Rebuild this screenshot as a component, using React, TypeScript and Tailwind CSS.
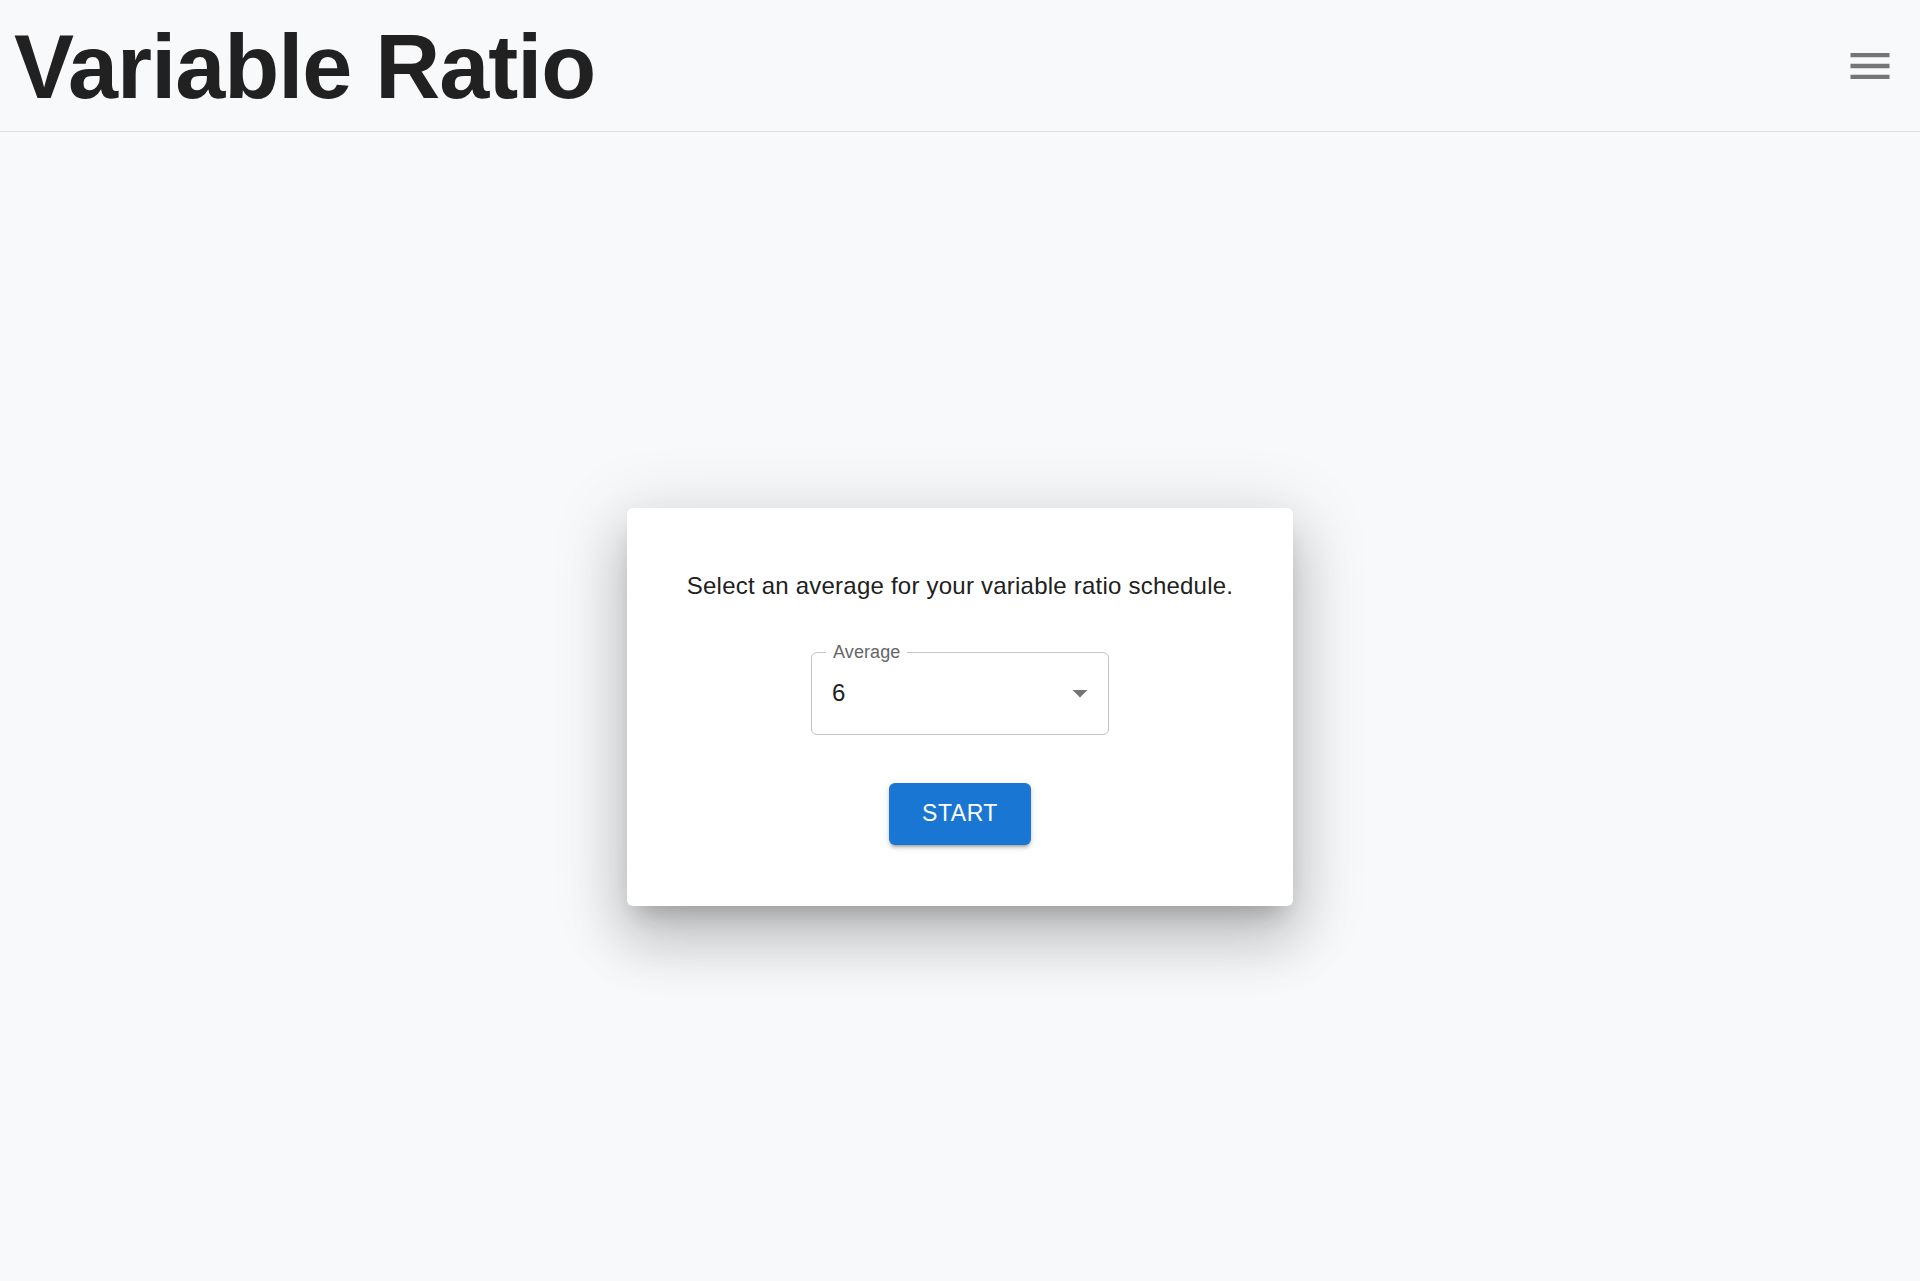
import React from 'react';

const MenuIcon = () => (
  <svg width="52" height="52" viewBox="0 0 24 24" fill="#757575">
    <path d="M3 18h18v-2H3zm0-5h18v-2H3zm0-7v2h18V6z" />
  </svg>
);

const ArrowDropDown = () => (
  <svg width="36" height="36" viewBox="0 0 24 24" fill="#757575">
    <path d="M7 10l5 5 5-5z" />
  </svg>
);

export default function App() {
  return (
    <div className="min-h-screen flex flex-col bg-[#f8f9fa] font-['Liberation_Sans',Arial,sans-serif] text-[#212121]">
      {/* Header */}
      <header className="h-[132px] flex items-center justify-between border-b border-[#dcdee0] pl-[14px] pr-6">
        <h1 className="text-[90px] font-bold leading-none tracking-[-1px] mt-[3px]">Variable Ratio</h1>
        <button className="flex items-center justify-center">
          <MenuIcon />
        </button>
      </header>

      {/* Main */}
      <main className="flex-1 flex items-center justify-center">
        <div className="w-[666px] h-[398px] bg-white rounded-[6px] pt-[60px] flex flex-col items-center shadow-[0_16px_22px_-10px_rgba(0,0,0,0.2),0_36px_57px_4px_rgba(0,0,0,0.14),0_14px_69px_12px_rgba(0,0,0,0.12)]">
          <p className="text-[24px] leading-[36px] tracking-[0.00938em] text-[#212121]">
            Select an average for your variable ratio schedule.
          </p>

          {/* Select */}
          <div className="relative mt-[48px] w-[298px] h-[83px] rounded-[6px] border border-[#c4c4c4] flex items-center pl-[20px] pr-[10px]">
            <span className="absolute left-[14px] -top-[12px] px-[7px] bg-white text-[18px] leading-[22px] text-[#666666] tracking-[0.1px]">
              Average
            </span>
            <span className="flex-1 text-[24px] leading-none text-[#212121]">6</span>
            <ArrowDropDown />
          </div>

          {/* Button */}
          <button className="mt-[48px] h-[62px] px-[33px] rounded-[6px] bg-[#1976d2] text-white text-[23px] tracking-[0.5px] uppercase shadow-[0_4px_2px_-3px_rgba(0,0,0,0.2),0_3px_3px_0_rgba(0,0,0,0.14),0_2px_8px_0_rgba(0,0,0,0.12)]">
            Start
          </button>
        </div>
      </main>
    </div>
  );
}
